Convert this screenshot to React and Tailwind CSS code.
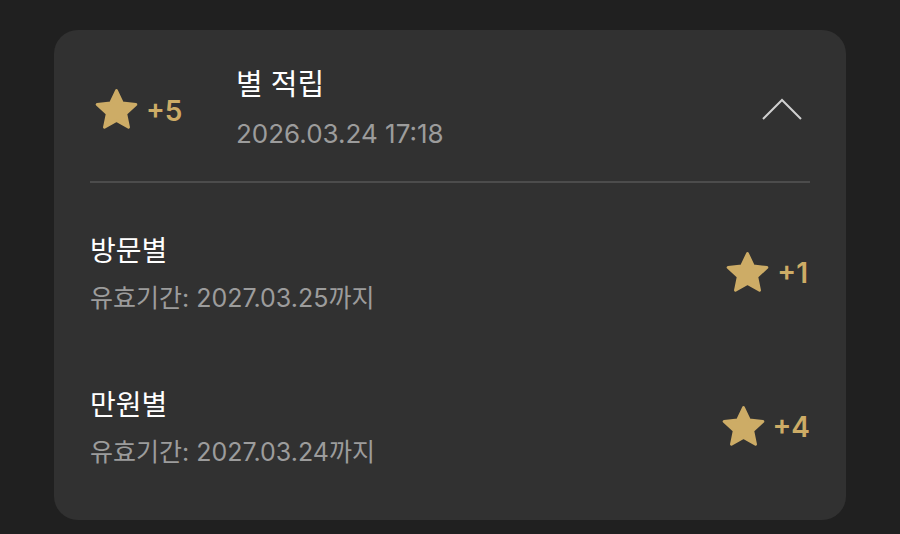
import { useState } from "react"

const GOLD = "text-[#cdac66]"

function Star({ size = 49 }) {
  return (
    <svg width={size} height={size} viewBox="0 0 24 24" className="shrink-0 -mx-[3px]">
      <path
        d="M12 2.2l2.85 6.1 6.65.75-4.95 4.55 1.35 6.6L12 16.9l-5.9 3.3 1.35-6.6L2.5 9.05l6.65-.75z"
        fill="#cdac66"
        stroke="#cdac66"
        strokeWidth="1.4"
        strokeLinejoin="round"
      />
    </svg>
  )
}

function StarRow({ title, until, amount, offset }) {
  return (
    <div className="flex items-center justify-between h-[154px]">
      <div className="flex flex-col">
        <span className="text-[28px] leading-[36px] text-white">{title}</span>
        <span className="text-[25px] leading-[30px] text-[#9c9c9c] mt-[14px]">
          유효기간: {until}까지
        </span>
      </div>
      <div className={`flex items-center gap-[8px] ${offset}`}>
        <Star />
        <span className={`text-[28px] font-semibold ${GOLD}`}>{amount}</span>
      </div>
    </div>
  )
}

export default function App() {
  const [open, setOpen] = useState(true)

  return (
    <div
      className="w-[900px] h-[534px] bg-[#202020] pt-[30px] pl-[54px]"
      style={{ fontFamily: "Inter, 'Noto Sans CJK KR', sans-serif" }}
    >
      <div className="w-[792px] h-[490px] bg-[#313131] rounded-[24px] px-[36px]">
        {/* header */}
        <div className="flex items-center h-[153px] border-b-2 border-[#4c4c4c]">
          <div className="flex items-center gap-[8px] w-[146px] pl-[5px] pt-[10px]">
            <Star />
            <span className={`text-[28px] font-semibold ${GOLD}`}>+5</span>
          </div>
          <div className="flex flex-col flex-1 mt-[4px]">
            <span className="text-[29px] leading-[36px] text-white">별 적립</span>
            <span className="text-[26px] leading-[30px] text-[#9c9c9c] mt-[16px]">
              2026.03.24 17:18
            </span>
          </div>
          <button onClick={() => setOpen(!open)} className="mr-[8px] mt-[6px]">
            <svg width="40" height="22" viewBox="0 0 40 22" fill="none">
              <path d="M1 21L20 2l19 19" stroke="#d0d0d0" strokeWidth="2" />
            </svg>
          </button>
        </div>

        {open && (
          <div className="pt-[13px]">
            <StarRow title="방문별" until="2027.03.25" amount="+1" offset="mr-[2px]" />
            <StarRow title="만원별" until="2027.03.24" amount="+4" offset="mr-0" />
          </div>
        )}
      </div>
    </div>
  )
}
